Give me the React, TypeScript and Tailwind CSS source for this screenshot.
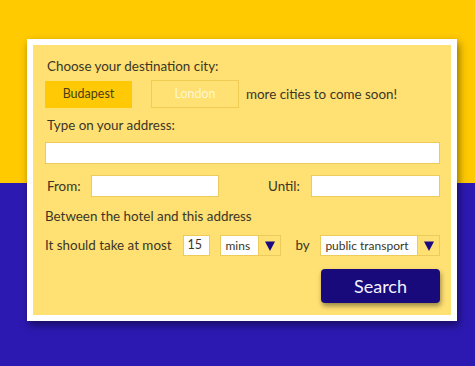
import React from 'react';

const Select: React.FC<{ value: string; w: string }> = ({ value, w }) => (
  <div className={`flex h-[21px] ${w} border border-[#eccb5c] bg-white`}>
    <div className="flex flex-1 items-center overflow-hidden whitespace-nowrap pl-[4px] text-[12px] text-[#3b3626]">{value}</div>
    <div className="flex w-[22px] items-center justify-center border-l border-[#eccb5c] bg-[#ffe073]">
      <svg width="10" height="10" viewBox="0 0 10 10">
        <polygon points="0,0.5 10,0.5 5,10" fill="#1c0b80" />
      </svg>
    </div>
  </div>
);

const App: React.FC = () => {
  return (
    <div className="relative h-[366px] w-[475px] overflow-hidden font-['Lato',sans-serif]">
      <div className="flex h-full flex-col">
        <div className="h-[183px] bg-[#ffca00]" />
        <div className="flex-1 bg-[#2c19b1]" />
      </div>

      <div className="absolute left-[27px] top-[39px] w-[430px] bg-white p-[6px] shadow-[2px_4px_8px_rgba(0,0,0,0.45)]">
        <div className="flex h-[270px] flex-col bg-[#ffe073] pl-[12px] pr-[11px] pt-[13px] text-[13.4px] text-[#3b3626]">
          <div className="h-[16px] pl-[2px] leading-[16px]">Choose your destination city:</div>

          <div className="mt-[6px] flex h-[28px] items-center">
            <button className="flex h-[27px] w-[87px] items-center justify-center bg-[#ffca05] text-[12.5px] text-[#4a3d10]">
              Budapest
            </button>
            <button className="ml-[19px] flex h-[28px] w-[88px] items-center justify-center border border-[#f0cc55] text-[12.5px] text-[#fff6d0]">
              London
            </button>
            <span className="ml-[7px]">more cities to come soon!</span>
          </div>

          <div className="mt-[9px] h-[16px] pl-[2px] leading-[16px]">Type on your address:</div>

          <div className="mt-[9px] h-[22px] w-full border border-[#eccb5c] bg-white" />

          <div className="mt-[11px] flex h-[22px] items-center">
            <span className="w-[46px] pl-[2px]">From:</span>
            <div className="h-[22px] w-[128px] border border-[#eccb5c] bg-white" />
            <span className="ml-[49px] w-[43px]">Until:</span>
            <div className="h-[22px] flex-1 border border-[#eccb5c] bg-white" />
          </div>

          <div className="mt-[11px] h-[16px] leading-[16px]">Between the hotel and this address</div>

          <div className="mt-[11px] flex h-[21px] items-center">
            <span className="w-[138px]">It should take at most</span>
            <div className="flex h-[21px] w-[28px] items-center border border-[#eccb5c] bg-white pl-[4px] text-[12.5px]">
              15
            </div>
            <div className="ml-[10px]">
              <Select value="mins" w="w-[61px]" />
            </div>
            <span className="ml-[14px] w-[25px]">by</span>
            <Select value="public transport" w="w-[120px]" />
          </div>

          <div className="mt-[13px] flex justify-end">
            <button className="flex h-[34px] w-[119px] items-center justify-center rounded-[4px] bg-[#180a7a] text-[18px] text-[#f4f2ff] shadow-[1px_3px_5px_rgba(0,0,0,0.4)]">
              Search
            </button>
          </div>
        </div>
      </div>
    </div>
  );
};

export default App;
